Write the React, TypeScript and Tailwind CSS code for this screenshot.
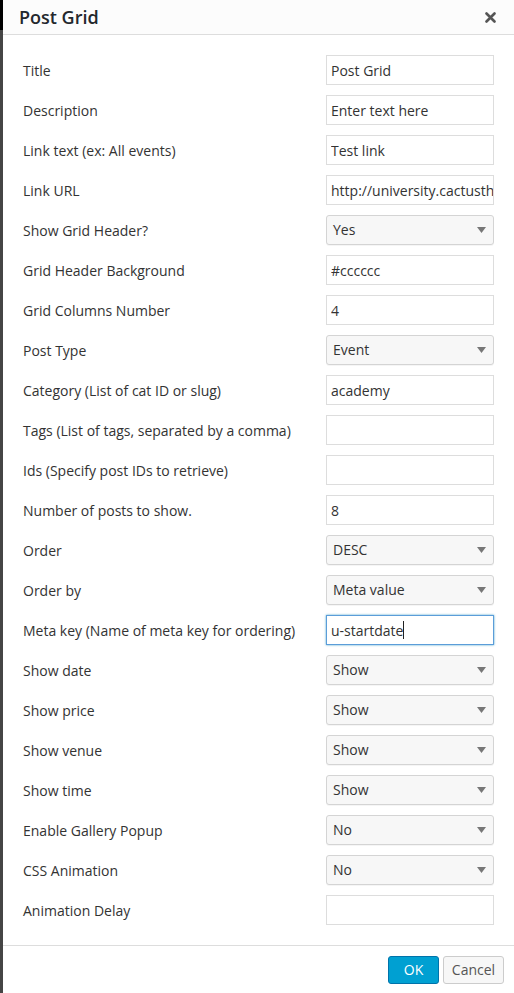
type Field = { label: string; kind: "text" | "select"; value?: string; focus?: boolean };

const fields: Field[] = [
  { label: "Title", kind: "text", value: "Post Grid" },
  { label: "Description", kind: "text", value: "Enter text here" },
  { label: "Link text (ex: All events)", kind: "text", value: "Test link" },
  { label: "Link URL", kind: "text", value: "http://university.cactusthemes.com" },
  { label: "Show Grid Header?", kind: "select", value: "Yes" },
  { label: "Grid Header Background", kind: "text", value: "#cccccc" },
  { label: "Grid Columns Number", kind: "text", value: "4" },
  { label: "Post Type", kind: "select", value: "Event" },
  { label: "Category (List of cat ID or slug)", kind: "text", value: "academy" },
  { label: "Tags (List of tags, separated by a comma)", kind: "text", value: "" },
  { label: "Ids (Specify post IDs to retrieve)", kind: "text", value: "" },
  { label: "Number of posts to show.", kind: "text", value: "8" },
  { label: "Order", kind: "select", value: "DESC" },
  { label: "Order by", kind: "select", value: "Meta value" },
  { label: "Meta key (Name of meta key for ordering)", kind: "text", value: "u-startdate", focus: true },
  { label: "Show date", kind: "select", value: "Show" },
  { label: "Show price", kind: "select", value: "Show" },
  { label: "Show venue", kind: "select", value: "Show" },
  { label: "Show time", kind: "select", value: "Show" },
  { label: "Enable Gallery Popup", kind: "select", value: "No" },
  { label: "CSS Animation", kind: "select", value: "No" },
  { label: "Animation Delay", kind: "text", value: "" },
];

function Control({ field }: { field: Field }) {
  if (field.kind === "select") {
    return (
      <div className="w-[168px] h-[30px] flex items-center justify-between pl-[6px] pr-[7px] pb-px bg-[#f7f7f7] border border-[#d4d4d4] rounded-[3px] shadow-[0_1px_0_rgba(0,0,0,0.04)]">
        <span className="text-[14px] text-[#333]">{field.value}</span>
        <svg width="9" height="6" viewBox="0 0 9 6">
          <path d="M0 0 H9 L4.5 6 Z" fill="#777" />
        </svg>
      </div>
    );
  }
  if (field.focus) {
    return (
      <div className="w-[168px] h-[30px] flex items-center pl-[4px] bg-white border border-[#5b9dd9] shadow-[0_0_2px_rgba(30,140,190,0.8)]">
        <span className="text-[14px] text-[#333]">{field.value}</span>
        <span className="w-px h-[18px] bg-[#222]" />
      </div>
    );
  }
  return (
    <div className="w-[168px] h-[30px] flex items-center bg-white border border-[#dddddd]">
      <input
        readOnly
        value={field.value}
        className="w-full h-full pl-[4px] bg-transparent outline-none text-[14px] text-[#333]"
      />
    </div>
  );
}

export default function App() {
  return (
    <div className="w-[514px] h-[993px] flex bg-[#444] font-['Open_Sans','Liberation_Sans',sans-serif]">
      <div className="w-[3px] flex flex-col">
        <div className="h-[30px] bg-black" />
        <div className="flex-1 bg-[#454545]" />
      </div>
      <div className="flex-1 flex flex-col bg-white">
        {/* Header */}
        <div className="h-[35px] flex items-center justify-between pl-[16px] pr-[18px] bg-[#fcfcfc] border-b border-[#dddddd]">
          <h1 className="text-[18px] font-semibold text-[#23282d] leading-none">Post Grid</h1>
          <svg width="11" height="11" viewBox="0 0 11 11">
            <path d="M1.5 1.5 L9.5 9.5 M9.5 1.5 L1.5 9.5" stroke="#555" strokeWidth="2.6" strokeLinecap="round" />
          </svg>
        </div>

        {/* Fields */}
        <div className="flex-1 flex flex-col pt-[15px] pl-[20px] pr-[20px]">
          {fields.map((f) => (
            <div key={f.label} className="h-[40px] flex items-center justify-between">
              <span className="text-[14px] text-[#333]">{f.label}</span>
              <Control field={f} />
            </div>
          ))}
        </div>

        {/* Footer */}
        <div className="h-[48px] flex items-center justify-end gap-[4px] pr-[10px] border-t border-[#dddddd]">
          <button className="w-[51px] h-[28px] rounded-[3px] bg-[#00a0d2] border border-[#0073aa] text-white text-[14px]">
            OK
          </button>
          <button className="w-[61px] h-[28px] rounded-[3px] bg-[#f7f7f7] border border-[#cccccc] text-[#555] text-[14px]">
            Cancel
          </button>
        </div>
      </div>
    </div>
  );
}
